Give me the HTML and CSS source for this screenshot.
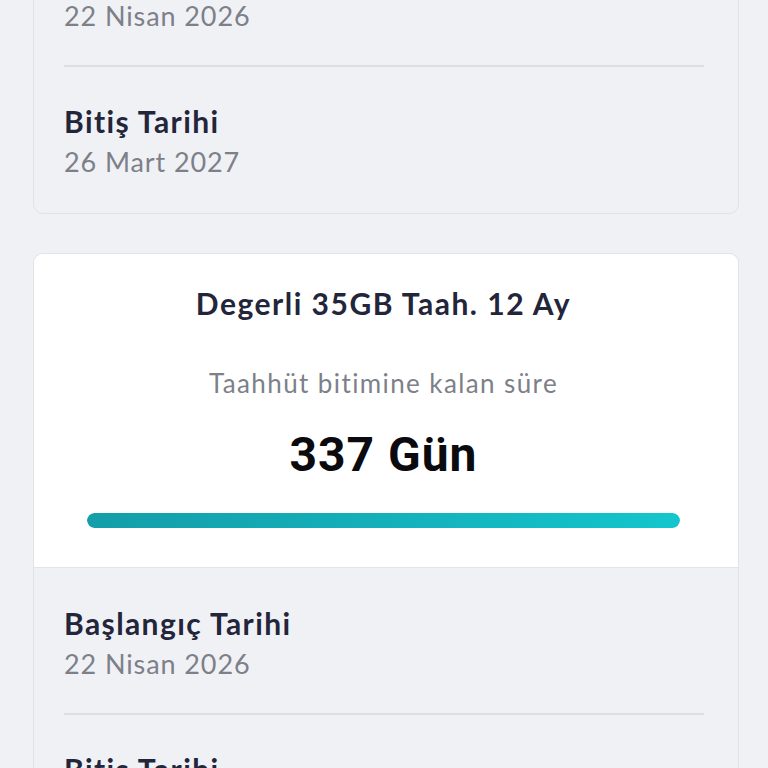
FILE: index.html
```html
<!DOCTYPE html>
<html lang="tr">
<head>
<meta charset="utf-8">
<link rel="stylesheet" href="styles.css">
</head>
<body>
<main class="page">
  <section class="card card-first">
    <div class="dates">
      <div class="date-row">
        <div class="date-label">Başlangıç Tarihi</div>
        <div class="date-value">22 Nisan 2026</div>
      </div>
      <div class="divider"></div>
      <div class="date-row">
        <div class="date-label">Bitiş Tarihi</div>
        <div class="date-value">26 Mart 2027</div>
      </div>
    </div>
  </section>
  <section class="card">
    <div class="summary">
      <div class="plan-title">Degerli 35GB Taah. 12 Ay</div>
      <div class="remain-label">Taahhüt bitimine kalan süre</div>
      <div class="remain-value">337 Gün</div>
      <div class="progress"><div class="progress-fill" style="width:100%"></div></div>
    </div>
    <div class="dates">
      <div class="date-row">
        <div class="date-label">Başlangıç Tarihi</div>
        <div class="date-value">22 Nisan 2026</div>
      </div>
      <div class="divider"></div>
      <div class="date-row">
        <div class="date-label">Bitiş Tarihi</div>
        <div class="date-value">26 Mart 2027</div>
      </div>
    </div>
  </section>
</main>
</body>
</html>
```

FILE: styles.css
```css
html, body {
  margin: 0;
  padding: 0;
  background: #f0f1f5;
  font-family: "Lato", "Noto Sans", sans-serif;
  overflow: hidden;
}
.page {
  display: flex;
  flex-direction: column;
  gap: 39px;
  padding: 0 29px 0 33px;
}
.card {
  border: 1px solid #e1e3e9;
  border-radius: 10px;
  background: #f0f1f5;
  overflow: hidden;
}
.card-first {
  margin-top: -81px;
}
.summary {
  background: #ffffff;
  border-bottom: 1px solid #e3e5ea;
  display: flex;
  flex-direction: column;
  align-items: center;
  padding: 31px 58px 39px 53px;
}
.plan-title {
  font-size: 30px;
  font-weight: 700;
  letter-spacing: 1.5px;
  color: #23253a;
  line-height: 36px;
}
.remain-label {
  margin-top: 46px;
  font-size: 26px;
  letter-spacing: 1.4px;
  color: #7d8089;
  line-height: 32px;
}
.remain-value {
  margin-top: 29px;
  font-family: "Roboto", "Liberation Sans", sans-serif;
  font-size: 48px;
  font-weight: 700;
  letter-spacing: 1px;
  color: #0b0b0f;
  line-height: 54px;
}
.progress {
  margin-top: 31px;
  width: 100%;
  height: 15px;
  border-radius: 8px;
  background: #e6e8ee;
  overflow: hidden;
}
.progress-fill {
  height: 100%;
  border-radius: 8px;
  background: linear-gradient(90deg, #139ea9 0%, #14b0ba 50%, #13c6cd 100%);
}
.dates {
  padding: 36px 34px 34px 30px;
  display: flex;
  flex-direction: column;
}
.date-row {
  display: flex;
  flex-direction: column;
  gap: 5px;
}
.date-label {
  font-size: 30px;
  font-weight: 700;
  letter-spacing: 1.4px;
  color: #23253a;
  line-height: 38px;
}
.date-value {
  font-size: 27px;
  letter-spacing: 0.9px;
  color: #7d8089;
  line-height: 34px;
}
.divider {
  height: 2px;
  background: #dcdee4;
  margin: 32px 0 35px;
}
```
